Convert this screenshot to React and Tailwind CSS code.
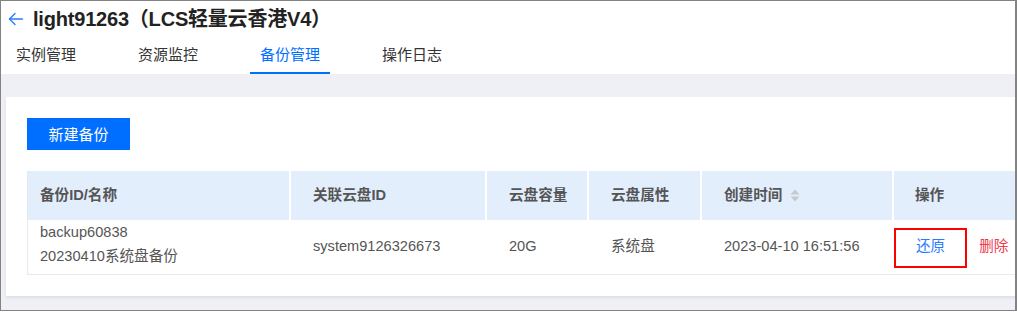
import React from "react";

const FONT = { fontFamily: '"Liberation Sans", "Noto Sans CJK SC", sans-serif' };

function BackArrow() {
  return (
    <svg width="16" height="14" viewBox="0 0 16 14" fill="none" stroke="#2b7bff" strokeWidth="1.4" strokeLinecap="round" strokeLinejoin="round">
      <path d="M1.5 7H14.5" />
      <path d="M7 1.5L1.5 7L7 12.5" />
    </svg>
  );
}

function SortIcon() {
  return (
    <svg width="10" height="13" viewBox="0 0 10 13" className="ml-[8px]">
      <path d="M5 0.5L9.5 5.5H0.5Z" fill="#c4c8cf" />
      <path d="M5 12.5L9.5 7.5H0.5Z" fill="#c4c8cf" />
    </svg>
  );
}

const cols = [
  { w: "w-[263px]", pl: "pl-[12px]" },
  { w: "w-[196px]", pl: "pl-[22px]" },
  { w: "w-[102px]", pl: "pl-[22px]" },
  { w: "w-[113px]", pl: "pl-[22px]" },
  { w: "w-[192px]", pl: "pl-[22px]" },
  { w: "w-[160px]", pl: "pl-[21px]" },
];

export default function App() {
  const tabs = ["实例管理", "资源监控", "备份管理", "操作日志"];
  return (
    <div className="w-[1017px] h-[312px] bg-white overflow-hidden" style={FONT}>
      <div className="w-[1017px] h-[311px] border-l border-t border-b border-r-2 border-[#838383] bg-[#eff0f5] overflow-hidden flex flex-col">
        {/* header */}
        <div className="bg-white h-[73px] shrink-0 flex flex-col">
          <div className="h-[35px] flex items-center pl-[7px]">
            <BackArrow />
            <span className="ml-[9px] text-[20px] font-bold text-[#222] leading-none tracking-[-0.2px]">light91263（LCS轻量云香港V4）</span>
          </div>
          <div className="flex h-[38px] pl-[5px] gap-[42px]">
            {tabs.map((t, i) => (
              <div
                key={t}
                className={
                  "w-[80px] h-[38px] flex justify-center pt-[9px] text-[15px] leading-[20px] border-b-2 " +
                  (i === 2 ? "text-[#006eff] border-[#006eff]" : "text-[#333] border-transparent")
                }
              >
                {t}
              </div>
            ))}
          </div>
        </div>

        {/* content */}
        <div className="pt-[23px] pl-[5px]">
          <div className="w-[1040px] h-[199px] bg-white shadow-[0_2px_3px_rgba(0,0,0,0.08)] pt-[21px] pl-[21px]">
            <button className="w-[103px] h-[32px] bg-[#006eff] text-white text-[15px] leading-none flex items-center justify-center">
              新建备份
            </button>
            <div className="mt-[21px] border-l border-b border-[#e6e9ee] w-[1000px]">
              {/* header row */}
              <div className="flex h-[49px] bg-[#e3eefd]">
                {["备份ID/名称", "关联云盘ID", "云盘容量", "云盘属性", "创建时间", "操作"].map((h, i) => (
                  <div
                    key={h}
                    className={
                      cols[i].w +
                      " " +
                      cols[i].pl +
                      " shrink-0 flex items-center text-[14.6px] font-bold text-[#555] " +
                      (i < 5 ? "border-r-2 border-white" : "")
                    }
                  >
                    {h}
                    {i === 4 && <SortIcon />}
                  </div>
                ))}
              </div>
              {/* body row */}
              <div className="flex h-[54px] text-[14.6px] text-[#555]">
                <div className={cols[0].w + " " + cols[0].pl + " shrink-0 flex flex-col justify-center leading-[24px] pb-[6px]"}>
                  <span>backup60838</span>
                  <span>20230410系统盘备份</span>
                </div>
                <div className={cols[1].w + " " + cols[1].pl + " shrink-0 flex items-center"}>system9126326673</div>
                <div className={cols[2].w + " " + cols[2].pl + " shrink-0 flex items-center"}>20G</div>
                <div className={cols[3].w + " " + cols[3].pl + " shrink-0 flex items-center"}>系统盘</div>
                <div className={cols[4].w + " " + cols[4].pl + " shrink-0 flex items-center"}>2023-04-10 16:51:56</div>
                <div className={cols[5].w + " shrink-0 flex items-center relative pl-[22px]"}>
                  <span className="text-[#2b7bff]">还原</span>
                  <span className="ml-[34px] text-[#ee3c4f]">删除</span>
                  <div className="absolute left-0 top-[8px] w-[73px] h-[40px] border-2 border-[#ff0000]" />
                </div>
              </div>
            </div>
          </div>
        </div>
      </div>
    </div>
  );
}
